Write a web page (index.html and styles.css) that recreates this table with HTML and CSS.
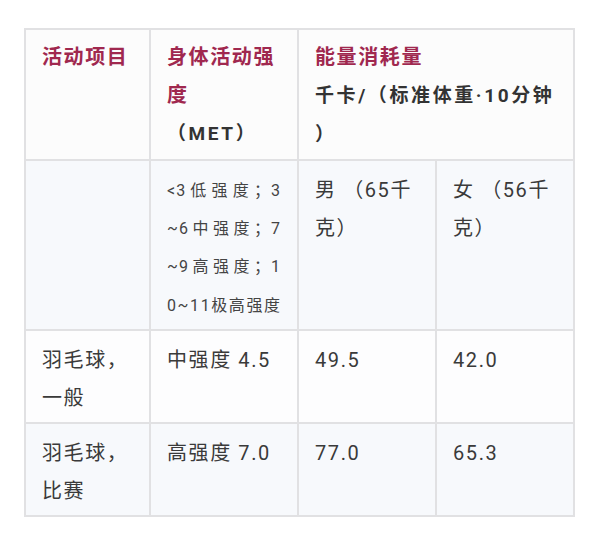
FILE: index.html
```html
<!DOCTYPE html>
<html lang="zh-CN">
<head>
<meta charset="utf-8">
<link rel="stylesheet" href="styles.css">
</head>
<body>
<div class="table">
  <div class="cell head">活动项目</div>
  <div class="cell head">身体活动强度<br><span class="sub">（MET）</span></div>
  <div class="cell head span2">能量消耗量<br><span class="sub">千卡/（标准体重·10分钟<br>）</span></div>

  <div class="cell alt"></div>
  <div class="cell alt small">
    <div class="jl">&lt;3低强度；3</div>
    <div class="jl">~6中强度；7</div>
    <div class="jl">~9高强度；1</div>
    <div class="ll">0~11极高强度</div>
  </div>
  <div class="cell alt">男 （65千克）</div>
  <div class="cell alt">女 （56千克）</div>

  <div class="cell">羽毛球，<br>一般</div>
  <div class="cell">中强度 4.5</div>
  <div class="cell">49.5</div>
  <div class="cell">42.0</div>

  <div class="cell alt">羽毛球，<br>比赛</div>
  <div class="cell alt">高强度 7.0</div>
  <div class="cell alt">77.0</div>
  <div class="cell alt">65.3</div>
</div>
</body>
</html>
```
FILE: styles.css
```css
html, body {
  margin: 0;
  padding: 0;
  background: #ffffff;
}

body {
  font-family: "Roboto", "Noto Sans CJK SC", sans-serif;
  color: #3a3a3a;
}

.table {
  margin: 28px 0 0 24px;
  width: 551px;
  box-sizing: border-box;
  display: grid;
  grid-template-columns: 125px 148px 138px 138px;
  border-top: 2px solid #e1e1e3;
  border-left: 2px solid #e1e1e3;
}

.cell {
  box-sizing: border-box;
  border-right: 2px solid #e1e1e3;
  border-bottom: 2px solid #e1e1e3;
  padding: 10px 16px 5px 16px;
  font-size: 20px;
  line-height: 38px;
  letter-spacing: 1.6px;
  background: #fdfdfe;
  word-break: break-all;
}

.head {
  background: #fcfcfc;
  color: #a0284f;
  font-weight: 700;
  padding-top: 8px;
}

.head .sub {
  color: #333333;
  font-size: 19px;
  letter-spacing: 2.6px;
  white-space: nowrap;
}

.span2 {
  grid-column: span 2;
}

.alt {
  background: #f7f9fc;
}

.small {
  font-size: 16px;
  line-height: 38.2px;
  letter-spacing: 1px;
  color: #444444;
  padding-top: 11px;
  padding-bottom: 4px;
}

.jl {
  text-align: justify;
  text-align-last: justify;
  white-space: nowrap;
}

.ll {
  white-space: nowrap;
  letter-spacing: 1.6px;
}
```
